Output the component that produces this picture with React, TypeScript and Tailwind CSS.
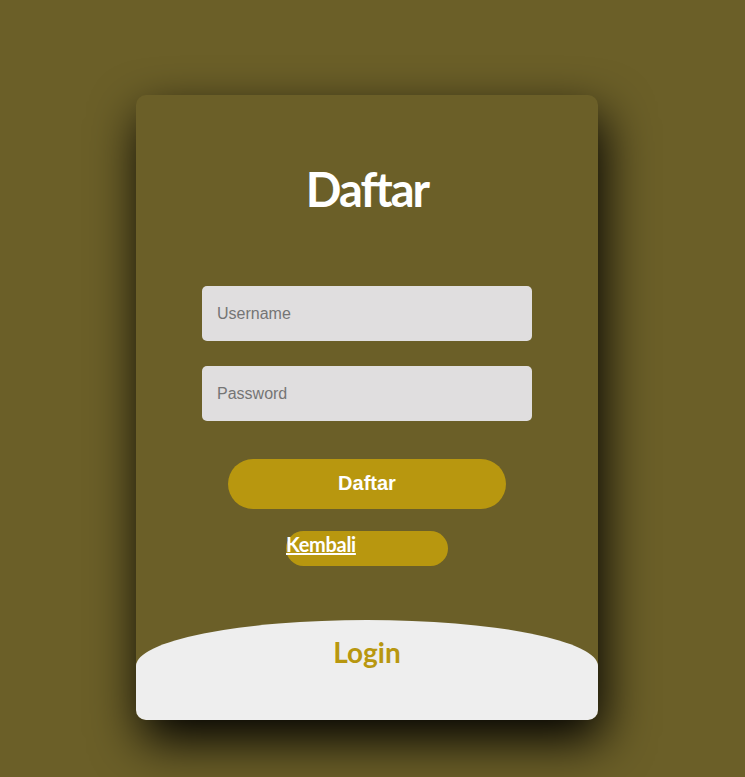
export default function App() {
  return (
    <div className="min-h-[777px] w-full bg-[#6b5f28] pt-[95px] pb-[57px]">
      <div className="ml-[136px] flex h-[625px] w-[462px] flex-col overflow-hidden rounded-[10px] bg-[#6b5f28] shadow-[5px_20px_50px_#000]">
        <h1 className="mt-[71px] text-center font-['Lato',sans-serif] text-[47px] font-bold leading-[47px] tracking-[-2px] text-white">
          Daftar
        </h1>

        <form className="mt-[73px] flex flex-col items-center" onSubmit={(e) => e.preventDefault()}>
          <input
            type="text"
            placeholder="Username"
            className="h-[55px] w-[330px] rounded-[5px] bg-[#e0dedf] px-[15px] font-['Liberation_Sans',sans-serif] text-[16px] text-[#333] outline-none placeholder:text-[#757575]"
          />
          <input
            type="password"
            placeholder="Password"
            className="mt-[25px] h-[55px] w-[330px] rounded-[5px] bg-[#e0dedf] px-[15px] font-['Liberation_Sans',sans-serif] text-[16px] text-[#333] outline-none placeholder:text-[#757575]"
          />
          <button
            type="submit"
            className="mt-[38px] h-[50px] w-[278px] rounded-[25px] bg-[#b8970f] pb-[2px] font-['Liberation_Sans',sans-serif] text-[20px] font-bold text-white"
          >
            Daftar
          </button>
          <div className="mt-[22px] h-[35px] w-[162px] rounded-[18px] bg-[#b8970f] pt-[3px]">
            <a href="#" className="font-['Lato',sans-serif] text-[20px] font-bold leading-[20px] tracking-[-0.3px] text-white underline">
              Kembali
            </a>
          </div>
        </form>

        {/* Login panel */}
        <div className="mt-auto h-[100px] rounded-t-[231px_46px] bg-[#eeeeee] pt-[18px] text-center">
          <span className="font-['Lato',sans-serif] text-[28px] font-bold leading-[28px] text-[#b8970f]">Login</span>
        </div>
      </div>
    </div>
  );
}
